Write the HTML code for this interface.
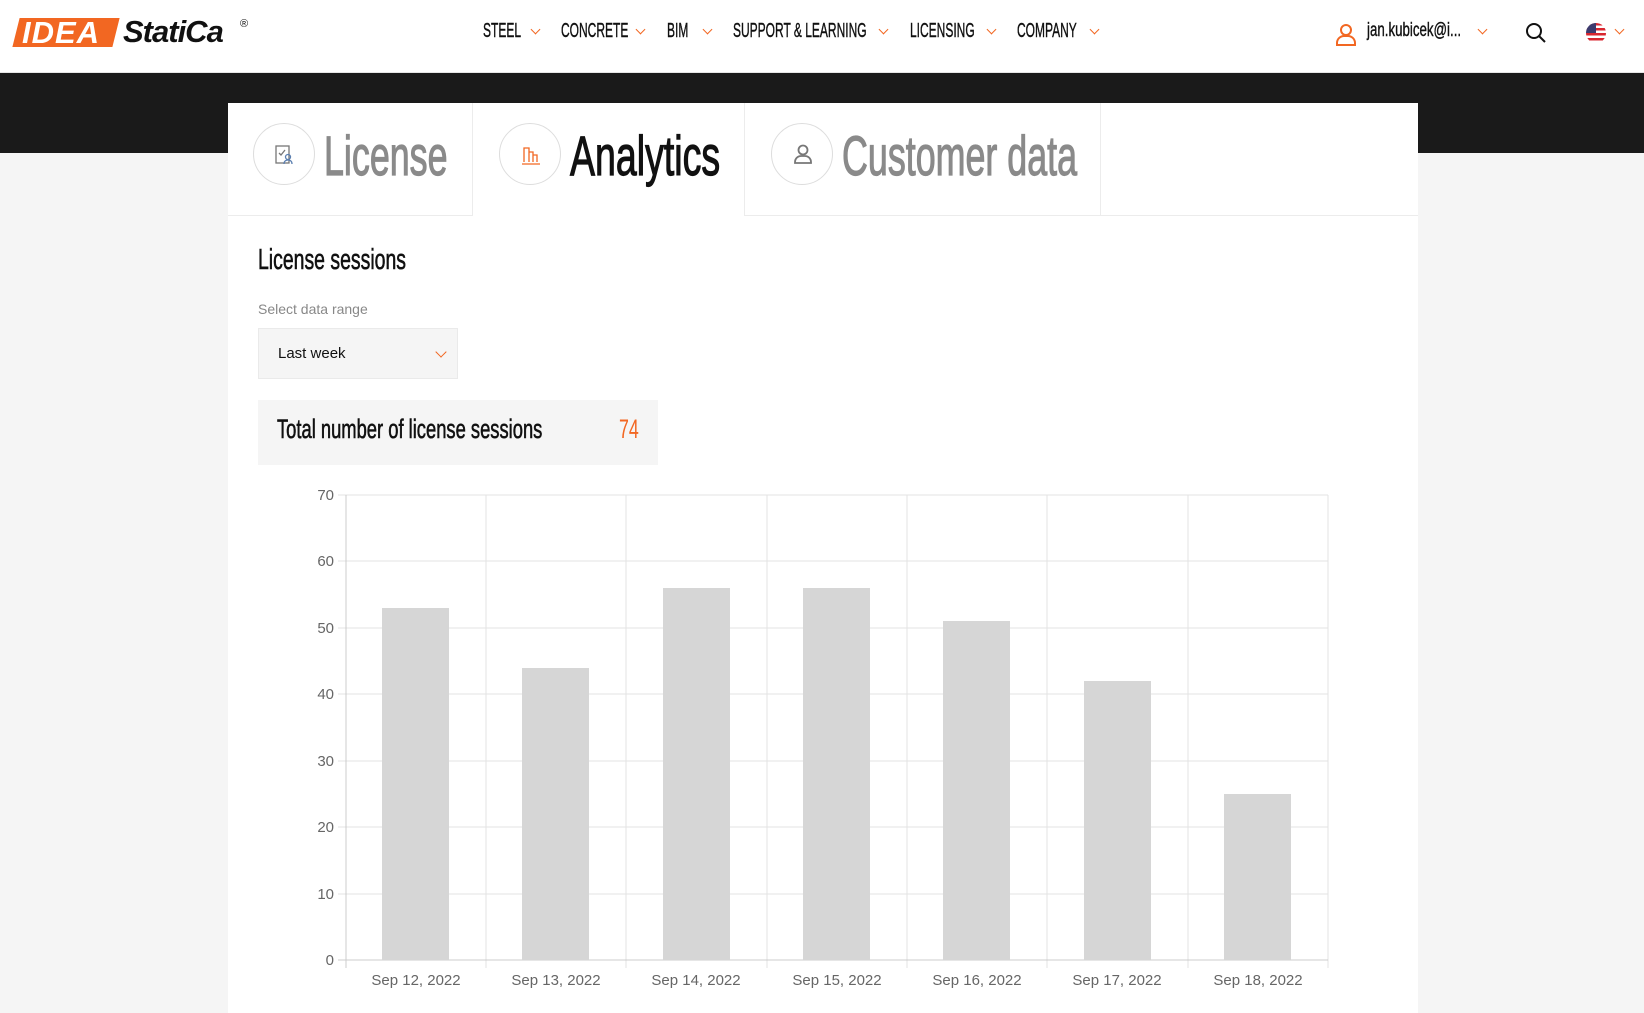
<!DOCTYPE html>
<html><head><meta charset="utf-8"><style>
*{margin:0;padding:0;box-sizing:border-box}
body{width:1644px;height:1013px;overflow:hidden;background:#f5f5f5;font-family:"Liberation Sans",sans-serif;position:relative}
.n{white-space:nowrap;transform-origin:0 0;transform:scaleX(0.72)}
.hdr{position:absolute;left:0;top:0;width:1644px;height:73px;background:#fff;border-bottom:1px solid #e5e5e5}
.band{position:absolute;left:0;top:73px;width:1644px;height:80px;background:#1a1a1a}
.card{position:absolute;left:228px;top:103px;width:1190px;height:910px;background:#fff}
.nav{position:absolute;top:20px;font-size:20px;color:#111;white-space:nowrap;transform-origin:0 0;transform:scaleX(0.6);-webkit-text-stroke:0.4px #111}
.chev{position:absolute;top:26px;width:7px;height:7px;border-right:1.6px solid #f26722;border-bottom:1.6px solid #f26722;transform:rotate(45deg)}
.tab{position:absolute;top:0;height:113px;border-right:1px solid #ececec;border-bottom:1px solid #ececec}
.circ{position:absolute;top:20px;width:62px;height:62px;border:1px solid #ddd;border-radius:50%}
.tt{position:absolute;top:20px;font-size:56px;color:#8a8a8a;-webkit-text-stroke:1.2px currentColor}
</style></head><body>
<div class="hdr">
 <div style="position:absolute;left:16px;top:18px;width:100px;height:29px;background:#f26722;transform:skewX(-14deg)"></div>
 <div style="position:absolute;left:22px;top:15px;font-size:31px;font-weight:bold;font-style:italic;color:#fff;letter-spacing:1px">IDEA</div>
 <div style="position:absolute;left:123px;top:14px;font-size:31px;font-weight:bold;font-style:italic;color:#111;letter-spacing:-1px">StatiCa</div>
 <div style="position:absolute;left:240px;top:18px;font-size:11px;color:#111">®</div>
 <div class="nav" style="left:483px">STEEL</div><span class="chev" style="left:532px"></span>
 <div class="nav" style="left:561px">CONCRETE</div><span class="chev" style="left:637px"></span>
 <div class="nav" style="left:667px">BIM</div><span class="chev" style="left:704px"></span>
 <div class="nav" style="left:733px">SUPPORT &amp; LEARNING</div><span class="chev" style="left:880px"></span>
 <div class="nav" style="left:910px">LICENSING</div><span class="chev" style="left:988px"></span>
 <div class="nav" style="left:1017px">COMPANY</div><span class="chev" style="left:1091px"></span>
 <svg style="position:absolute;left:1334px;top:22px" width="24" height="24" viewBox="0 0 24 24" fill="none" stroke="#f26722" stroke-width="2"><circle cx="12" cy="8" r="5"/><path d="M3 23v-2a7 7 0 0 1 7-7h4a7 7 0 0 1 7 7v2z"/></svg>
 <div class="nav" style="left:1367px;font-size:19px;transform:scaleX(0.7)">jan.kubicek@i...</div><span class="chev" style="left:1479px"></span>
 <svg style="position:absolute;left:1525px;top:22px" width="22" height="22" viewBox="0 0 22 22" fill="none" stroke="#111" stroke-width="2"><circle cx="9" cy="9" r="7"/><path d="M14 14l6 6"/></svg>
 <svg style="position:absolute;left:1586px;top:23px" width="20" height="20" viewBox="0 0 20 20"><clipPath id="c"><circle cx="10" cy="10" r="10"/></clipPath><g clip-path="url(#c)"><rect width="20" height="20" fill="#fff"/><g fill="#d8262f"><rect y="0" width="20" height="2.5"/><rect y="5" width="20" height="2.5"/><rect y="10" width="20" height="2.5"/><rect y="15" width="20" height="2.5"/></g><rect width="10" height="10" fill="#3c3b6e"/></g></svg>
 <span class="chev" style="left:1616px"></span>
</div>
<div class="band"></div>
<div class="card">
 <div class="tab" style="left:0;width:245px"></div>
 <div class="tab" style="left:245px;width:272px;border-bottom:none"></div>
 <div class="tab" style="left:517px;width:356px"></div>
 <div style="position:absolute;left:873px;top:112px;width:317px;height:1px;background:#ececec"></div>
 <div class="circ" style="left:25px"><svg style="position:absolute;left:20px;top:20px" width="22" height="22" viewBox="0 0 22 22" fill="none" stroke="#777" stroke-width="1.3"><rect x="2" y="2" width="13" height="17"/><path d="M5 9l2 2 4-5"/><circle cx="14" cy="13" r="2.5" stroke="#5b7fb0"/><path d="M10 20c0-3 2-4 4-4s4 1 4 4" stroke="#5b7fb0"/></svg></div>
 <div class="tt n" style="left:96px;transform:scaleX(0.64)">License</div>
 <div class="circ" style="left:271px"><svg style="position:absolute;left:20px;top:20px" width="22" height="22" viewBox="0 0 22 22" fill="none" stroke="#f26722" stroke-width="1.3"><path d="M4 18V4h5v14M9 18V8h4v10M13 18v-7h4v7M2 20h18"/></svg></div>
 <div class="tt n" style="left:342px;color:#111;transform:scaleX(0.67)">Analytics</div>
 <div class="circ" style="left:543px"><svg style="position:absolute;left:19px;top:18px" width="24" height="24" viewBox="0 0 24 24" fill="none" stroke="#777" stroke-width="1.8"><circle cx="12" cy="8" r="4.5"/><path d="M4 21v-1a6 6 0 0 1 6-6h4a6 6 0 0 1 6 6v1z"/></svg></div>
 <div class="tt n" style="left:614px;transform:scaleX(0.64)">Customer data</div>

 <div class="n" style="position:absolute;left:30px;top:141px;font-size:29px;color:#111;transform:scaleX(0.67);-webkit-text-stroke:0.6px #111">License sessions</div>
 <div style="position:absolute;left:30px;top:198px;font-size:14px;color:#888">Select data range</div>
 <div style="position:absolute;left:30px;top:225px;width:200px;height:51px;background:#f5f5f5;border:1px solid #eaeaea"></div>
 <div style="position:absolute;left:50px;top:242px;font-size:15px;color:#111">Last week</div>
 <span class="chev" style="left:209px;top:245px;width:8px;height:8px"></span>
 <div style="position:absolute;left:30px;top:297px;width:400px;height:65px;background:#f5f5f5"></div>
 <div class="n" style="position:absolute;left:49px;top:311px;font-size:27px;color:#111;transform:scaleX(0.68);-webkit-text-stroke:0.6px #111">Total number of license sessions</div>
 <div class="n" style="position:absolute;left:391px;top:311px;font-size:27px;color:#f26722;transform:scaleX(0.66)">74</div>
</div>
<svg style="position:absolute;left:0;top:0" width="1644" height="1013" font-family="Liberation Sans, sans-serif" font-size="15" fill="#666">
 <g stroke="#e3e3e3" stroke-width="1">
  <line x1="338" y1="495" x2="1328" y2="495"/><line x1="338" y1="561" x2="1328" y2="561"/><line x1="338" y1="628" x2="1328" y2="628"/><line x1="338" y1="694" x2="1328" y2="694"/><line x1="338" y1="761" x2="1328" y2="761"/><line x1="338" y1="827" x2="1328" y2="827"/><line x1="338" y1="894" x2="1328" y2="894"/>
  <line x1="486" y1="495" x2="486" y2="968"/><line x1="626" y1="495" x2="626" y2="968"/><line x1="767" y1="495" x2="767" y2="968"/><line x1="907" y1="495" x2="907" y2="968"/><line x1="1047" y1="495" x2="1047" y2="968"/><line x1="1188" y1="495" x2="1188" y2="968"/><line x1="1328" y1="495" x2="1328" y2="968"/>
 </g>
 <g stroke="#ccc"><line x1="346" y1="495" x2="346" y2="968"/><line x1="338" y1="960" x2="1328" y2="960"/></g>
 <g fill="#d6d6d6">
  <rect x="382" y="608" width="67" height="352"/><rect x="522" y="668" width="67" height="292"/><rect x="663" y="588" width="67" height="372"/><rect x="803" y="588" width="67" height="372"/><rect x="943" y="621" width="67" height="339"/><rect x="1084" y="681" width="67" height="279"/><rect x="1224" y="794" width="67" height="166"/>
 </g>
 <g text-anchor="end"><text x="334" y="500">70</text><text x="334" y="566">60</text><text x="334" y="633">50</text><text x="334" y="699">40</text><text x="334" y="766">30</text><text x="334" y="832">20</text><text x="334" y="899">10</text><text x="334" y="965">0</text></g>
 <g text-anchor="middle"><text x="416" y="985">Sep 12, 2022</text><text x="556" y="985">Sep 13, 2022</text><text x="696" y="985">Sep 14, 2022</text><text x="837" y="985">Sep 15, 2022</text><text x="977" y="985">Sep 16, 2022</text><text x="1117" y="985">Sep 17, 2022</text><text x="1258" y="985">Sep 18, 2022</text></g>
</svg>
</body></html>
